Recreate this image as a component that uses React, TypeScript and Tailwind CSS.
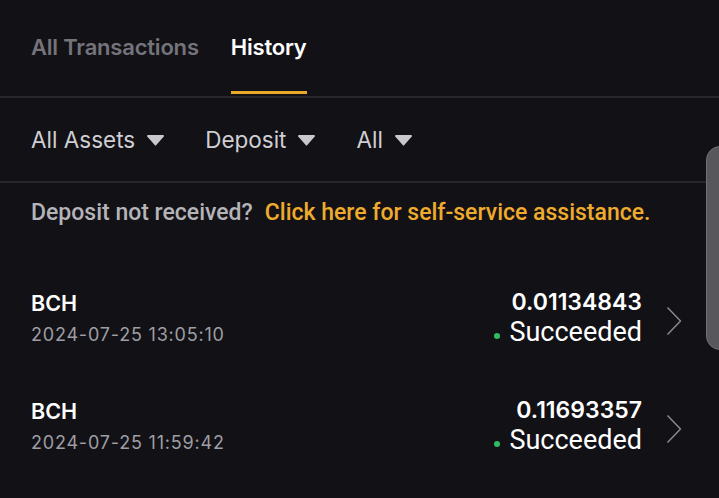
const tabs = [
  { label: "All Transactions", active: false },
  { label: "History", active: true },
];

const filters = ["All Assets", "Deposit", "All"];

const rows = [
  { coin: "BCH", time: "2024-07-25 13:05:10", amount: "0.01134843", status: "Succeeded" },
  { coin: "BCH", time: "2024-07-25 11:59:42", amount: "0.11693357", status: "Succeeded" },
];

function Caret() {
  return (
    <svg width="19" height="12" viewBox="0 0 19 12" aria-hidden className="text-[#c9c9cd]">
      <path d="M2 1h15a1 1 0 0 1 .8 1.6l-7.5 8.4a1 1 0 0 1-1.6 0L1.2 2.6A1 1 0 0 1 2 1z" fill="currentColor" />
    </svg>
  );
}

function Chevron() {
  return (
    <svg width="16" height="30" viewBox="0 0 16 30" aria-hidden className="text-[#8c8c92]">
      <path d="M1.5 1.5 14.5 15 1.5 28.5" fill="none" stroke="currentColor" strokeWidth="1.4" strokeLinejoin="round" />
    </svg>
  );
}

export default function App() {
  return (
    <div className="relative h-[498px] w-[719px] overflow-hidden bg-[#121116] font-['Inter',sans-serif]">
      {/* tab strip */}
      <div className="flex gap-[32px] border-b-2 border-[#28272d] px-[31px] pb-[2px] pt-[32px]">
        {tabs.map((t) => (
          <div key={t.label} className="flex flex-col">
            <span
              className={
                "text-[22px] font-semibold leading-[30px] tracking-[-0.2px] " +
                (t.active ? "text-white" : "text-[#74747a]")
              }
            >
              {t.label}
            </span>
            <span className={"mt-[29px] h-[3px] " + (t.active ? "bg-[#eaa92b]" : "bg-transparent")} />
          </div>
        ))}
      </div>

      {/* filters */}
      <div className="flex h-[85px] items-center gap-[40px] border-b-2 border-[#28272d] px-[31px]">
        {filters.map((f) => (
          <button key={f} className="flex items-center gap-[11px] text-[22.5px] leading-[30px] text-[#cfcfd3]">
            {f}
            <Caret />
          </button>
        ))}
      </div>

      <p className="px-[31px] pt-[15px] font-['Roboto',sans-serif] text-[23px] font-medium leading-[30px] text-[#b4b4b9]">
        Deposit not received?
        <span className="ml-[12px] text-[#efab2d]">Click here for self-service assistance.</span>
      </p>

      <ul className="mt-[59px] flex flex-col">
        {rows.map((r) => (
          <li key={r.amount} className="flex h-[108px] items-start pl-[31px] pr-[37px]">
            <div className="flex flex-1 flex-col pt-[2px]">
              <span className="text-[21.5px] font-semibold leading-[28px] text-white">{r.coin}</span>
              <span className="mt-[6px] text-[18px] leading-[24px] tracking-[0.8px] text-[#9e9ea4]">{r.time}</span>
            </div>
            <div className="flex flex-col items-end">
              <span className="text-[23px] font-semibold leading-[30px] text-white">{r.amount}</span>
              <span className="flex items-center gap-[9px] font-['Roboto',sans-serif] text-[27px] leading-[30px] text-white">
                <span className="mt-[7px] h-[6px] w-[6px] rounded-full bg-[#2ebd5f]" />
                {r.status}
              </span>
            </div>
            <div className="ml-[24px] mt-[19px]">
              <Chevron />
            </div>
          </li>
        ))}
      </ul>

      {/* floating side handle */}
      <div className="absolute left-[706px] top-[146px] h-[204px] w-[30px] rounded-[14px] border border-[#717175] bg-[#58585c]" />
    </div>
  );
}
